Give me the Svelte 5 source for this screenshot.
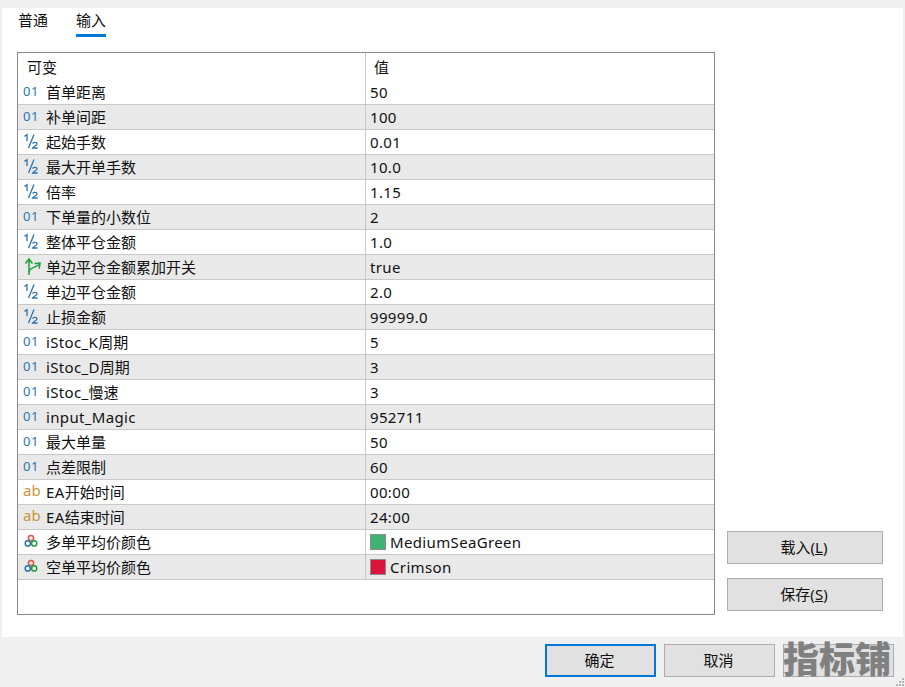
<script>
    const rows = [
        { type: "int", name: "首单距离", value: "50" },
        { type: "int", name: "补单间距", value: "100" },
        { type: "frac", name: "起始手数", value: "0.01" },
        { type: "frac", name: "最大开单手数", value: "10.0" },
        { type: "frac", name: "倍率", value: "1.15" },
        { type: "int", name: "下单量的小数位", value: "2" },
        { type: "frac", name: "整体平仓金额", value: "1.0" },
        { type: "bool", name: "单边平仓金额累加开关", value: "true" },
        { type: "frac", name: "单边平仓金额", value: "2.0" },
        { type: "frac", name: "止损金额", value: "99999.0" },
        { type: "int", name: "iStoc_K周期", value: "5" },
        { type: "int", name: "iStoc_D周期", value: "3" },
        { type: "int", name: "iStoc_慢速", value: "3" },
        { type: "int", name: "input_Magic", value: "952711" },
        { type: "int", name: "最大单量", value: "50" },
        { type: "int", name: "点差限制", value: "60" },
        { type: "str", name: "EA开始时间", value: "00:00" },
        { type: "str", name: "EA结束时间", value: "24:00" },
        { type: "color", name: "多单平均价颜色", value: "MediumSeaGreen", swatch: "#3cb371" },
        { type: "color", name: "空单平均价颜色", value: "Crimson", swatch: "#dc143c" }
    ];

    // latin runs get a little tracking, the CJK ones stay on the 15px grid
    function runs(text) {
        return text.match(/[\x00-\x7f]+|[^\x00-\x7f]+/g);
    }
</script>

<div class="dialog">
    <div class="panel">
        <nav class="tabs">
            <span class="tab">普通</span>
            <span class="tab active">输入</span>
        </nav>
        <div class="content">
            <div class="table">
                <div class="head">
                    <div class="col-name">可变</div>
                    <div class="col-value">值</div>
                </div>
                {#each rows as row, i}
                    <div class="row" class:odd={i % 2 === 1}>
                        <div class="cell-name">
                            <span class="icon">
                                {#if row.type === "int"}
                                    <span class="int">01</span>
                                {:else if row.type === "frac"}
                                    <svg width="16" height="17" viewBox="0 0 16 17" fill="none" stroke="#2a74b0" stroke-width="1.3">
                                        <path d="M1.5 3.4 L4 1.8 V8" />
                                        <path d="M11 1.5 L5.5 15" />
                                        <path d="M9.6 10.6 C10 8.8 14 8.8 14 10.9 C14 12.6 10.6 13.2 9.6 15 H14.6" />
                                    </svg>
                                {:else if row.type === "bool"}
                                    <svg width="20" height="20" viewBox="0 0 20 20" fill="none" stroke="#1fa038" stroke-width="1.5">
                                        <path d="M6 19 V4 M2.5 7.5 L6 3 L9.5 7.5" />
                                        <path d="M6 16 C6 11.5 11 12.5 16 8.5 M11.5 7.5 L17 7 L16.2 12.6" />
                                    </svg>
                                {:else if row.type === "str"}
                                    <span class="str">ab</span>
                                {:else}
                                    <svg width="16" height="16" viewBox="0 0 16 16" fill="none" stroke-width="1.5">
                                        <circle cx="8" cy="5" r="2.6" stroke="#e0534a" />
                                        <circle cx="4.8" cy="10.4" r="2.6" stroke="#2a74b0" />
                                        <circle cx="11.2" cy="10.4" r="2.6" stroke="#1fa038" />
                                    </svg>
                                {/if}
                            </span>
                            <span>
                                {#each runs(row.name) as run}
                                    <span class:latin={run.charCodeAt(0) < 128}>{run}</span>
                                {/each}
                            </span>
                        </div>
                        <div class="cell-value">
                            {#if row.swatch}
                                <span class="swatch" style="background: {row.swatch}"></span>
                            {/if}
                            <span class="latin">{row.value}</span>
                        </div>
                    </div>
                {/each}
            </div>
            <div class="side">
                <button>载入(<u>L</u>)</button>
                <button>保存(<u>S</u>)</button>
            </div>
        </div>
    </div>
    <div class="footer">
        <button class="primary">确定</button>
        <button>取消</button>
        <div class="mark-wrap">
            <button class="hidden-btn"></button>
            <span class="mark">指标铺</span>
        </div>
    </div>
    <svg class="grip" width="10" height="10" viewBox="0 0 10 10" fill="#b4b4b4">
        <rect x="7" y="1" width="2" height="2" />
        <rect x="4" y="4" width="2" height="2" />
        <rect x="7" y="4" width="2" height="2" />
        <rect x="1" y="7" width="2" height="2" />
        <rect x="4" y="7" width="2" height="2" />
        <rect x="7" y="7" width="2" height="2" />
    </svg>
</div>

<style>
    :global(body) {
        margin: 0;
    }

    .dialog {
        position: relative;
        width: 905px;
        height: 687px;
        box-sizing: border-box;
        padding: 8px 2px 0;
        background: #f0f0f0;
        font-family: "Noto Sans", "Noto Sans CJK SC", sans-serif;
        font-size: 15px;
        color: #111;
        overflow: hidden;
    }

    .panel {
        height: 629px;
        background: #fff;
        box-sizing: border-box;
        padding-left: 15px;
    }

    .tabs {
        display: flex;
        gap: 28px;
        height: 44px;
        padding-left: 1px;
    }

    .tab {
        height: 26px;
        line-height: 24px;
    }

    .tab.active {
        border-bottom: 3px solid #0078d7;
    }

    .content {
        display: flex;
        align-items: flex-end;
    }

    .table {
        width: 698px;
        height: 563px;
        box-sizing: border-box;
        border: 1px solid #888;
    }

    .head {
        display: flex;
        height: 27px;
        line-height: 29px;
    }

    .col-name {
        width: 348px;
        padding-left: 9px;
        box-sizing: border-box;
        border-right: 1px solid #c8c8c8;
    }

    .col-value {
        padding-left: 8px;
    }

    .row {
        display: flex;
        height: 25px;
        box-sizing: border-box;
        border-bottom: 1px solid #c8c8c8;
        line-height: 25px;
    }

    .row.odd {
        background: #e9e9e9;
    }

    .cell-name {
        display: flex;
        width: 348px;
        box-sizing: border-box;
        border-right: 1px solid #c8c8c8;
        padding-left: 5px;
    }

    .latin {
        letter-spacing: 0.35px;
    }

    .icon {
        width: 23px;
        flex: none;
        display: flex;
        align-items: center;
    }

    .icon svg {
        margin-top: -2px;
    }

    .int {
        font-size: 13px;
        letter-spacing: 0.6px;
        color: #2a74b0;
        line-height: 20px;
        margin-top: -3px;
    }

    .str {
        font-size: 15px;
        color: #c8963c;
        line-height: 20px;
        margin-top: -4px;
    }

    .cell-value {
        display: flex;
        align-items: center;
        gap: 4px;
        padding-left: 4px;
    }

    .swatch {
        width: 14px;
        height: 14px;
        border: 1px solid #8c8c8c;
        margin-top: -1px;
    }

    .side {
        display: flex;
        flex-direction: column;
        gap: 14px;
        margin-left: 12px;
        margin-bottom: 4px;
    }

    button {
        width: 156px;
        height: 33px;
        padding: 0 2px 2px 0;
        background: #e1e1e1;
        border: 1px solid #adadad;
        box-sizing: border-box;
        font: inherit;
        color: #111;
    }

    .footer {
        display: flex;
        gap: 8px;
        padding: 7px 0 0 543px;
    }

    .footer button {
        width: 111px;
    }

    .footer button.primary {
        border: 2px solid #0078d7;
    }

    .mark-wrap {
        position: relative;
    }

    .mark {
        position: absolute;
        left: 0;
        top: -4px;
        font-size: 36px;
        line-height: 40px;
        font-weight: 900;
        color: #808080;
        white-space: nowrap;
    }

    .grip {
        position: absolute;
        right: 0;
        bottom: 0;
    }
</style>
